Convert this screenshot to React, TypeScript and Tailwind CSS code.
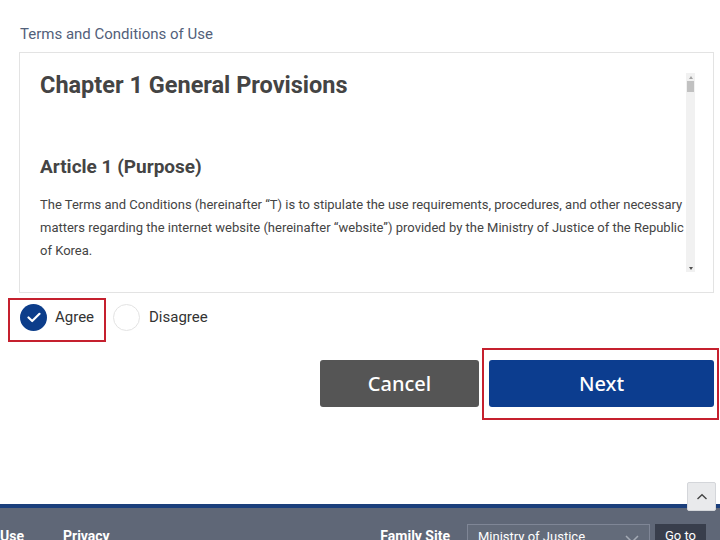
import { useState } from "react";

const paragraph =
  "The Terms and Conditions (hereinafter \u201CT) is to stipulate the use requirements, procedures, and other necessary matters regarding the internet website (hereinafter \u201Cwebsite\u201D) provided by the Ministry of Justice of the Republic of Korea.";

const App = () => {
  const [agree, setAgree] = useState(true);

  return (
    <div className="relative h-[540px] w-[720px] overflow-hidden bg-white font-['Roboto','Liberation_Sans',sans-serif]">
      <section className="pl-[19px] pr-[6px] pt-[24px]">
        <h2 className="pl-px text-[15px] leading-5 text-[#52607a]">Terms and Conditions of Use</h2>

        <div className="mt-[8px] flex h-[241px] border border-[#e3e3e3] py-5 pl-5 pr-[18px]">
          <div className="flex-1 text-[#444]">
            <h3 className="-mt-[2px] text-[23.5px] leading-7 font-bold">Chapter 1 General Provisions</h3>
            <h4 className="mt-[54px] text-[19px] leading-7 font-bold">Article 1 (Purpose)</h4>
            <p className="mt-[12px] text-[13px] leading-[23px]">{paragraph}</p>
          </div>
          {/* fake scrollbar */}
          <div className="flex w-[9px] flex-col bg-[#f1f1f1]">
            <div className="flex h-[8px] items-center justify-center">
              <div className="h-0 w-0 border-x-[2px] border-b-[3px] border-x-transparent border-b-[#a3a3a3]" />
            </div>
            <div className="mx-px h-[11px] bg-[#c1c1c1]" />
            <div className="flex-1" />
            <div className="flex h-[8px] items-center justify-center">
              <div className="h-0 w-0 border-x-[2px] border-t-[3px] border-x-transparent border-t-[#505050]" />
            </div>
          </div>
        </div>
      </section>

      {/* agree / disagree */}
      <div className="mt-[5px] flex items-start pl-[8px]">
        <button
          onClick={() => setAgree(true)}
          className="flex h-[44px] w-[98px] items-center gap-[8px] border-2 border-[#c5202e] pb-[6px] pl-[10px]"
        >
          <span
            className={`flex h-[27px] w-[27px] items-center justify-center rounded-full ${
              agree ? "bg-[#0c3d8a]" : "border border-[#e3e3e3] bg-white"
            }`}
          >
            {agree && (
              <svg width="14" height="11" viewBox="0 0 14 11" fill="none">
                <path d="M1.5 5.5 L5.2 9 L12.5 1.8" stroke="white" strokeWidth="2.2" strokeLinecap="round" strokeLinejoin="round" />
              </svg>
            )}
          </span>
          <span className="text-[15px] text-[#333]">Agree</span>
        </button>
        <button onClick={() => setAgree(false)} className="ml-[7px] mt-[6px] flex items-center gap-[9px]">
          <span
            className={`flex h-[27px] w-[27px] items-center justify-center rounded-full ${
              !agree ? "bg-[#0c3d8a]" : "border border-[#e3e3e3] bg-white"
            }`}
          />
          <span className="text-[15px] text-[#333]">Disagree</span>
        </button>
      </div>

      {/* actions */}
      <div className="mt-[6px] flex items-start justify-end gap-[3px] pr-px">
        <button className="mt-[12px] h-[47px] w-[159px] rounded-[3px] bg-[#555] font-['Noto_Sans',sans-serif] text-[20px] font-medium text-white">
          Cancel
        </button>
        <div className="border-2 border-[#c5202e] pt-[10px] pr-[3px] pb-[11px] pl-[5px]">
          <button className="block h-[47px] w-[225px] rounded-[3px] bg-[#0c3d8f] font-['Noto_Sans',sans-serif] text-[20px] font-medium text-white">
            Next
          </button>
        </div>
      </div>

      {/* footer */}
      <footer className="absolute inset-x-0 top-[504px] h-[36px] border-t-[4px] border-[#1b3f7c] bg-[#5f6777]">
        <div className="flex h-full items-end text-[14px] font-bold text-white">
          <span className="-mb-[7px]">Use</span>
          <span className="-mb-[7px] ml-[39px]">Privacy</span>
          <span className="-mb-[7px] ml-auto">Family Site</span>
          <div className="ml-[17px] flex h-[16px] w-[183px] items-start justify-between border border-b-0 border-[#7f8696] bg-[#636b7a] px-[10px] pt-[4px] text-[13px] font-normal leading-4">
            <span>Ministry of Justice</span>
            <svg className="mt-[6px]" width="14" height="8" viewBox="0 0 14 8" fill="none">
              <path d="M1 1 L7 7 L13 1" stroke="#a4aab5" strokeWidth="1.5" />
            </svg>
          </div>
          <div className="ml-[5px] mr-[14px] flex h-[16px] w-[51px] justify-center bg-[#383e4c] pt-[4px] text-[13px] font-normal leading-4">
            Go to
          </div>
        </div>
      </footer>

      {/* back to top */}
      <button className="absolute left-[687px] top-[482px] flex h-[29px] w-[29px] items-center justify-center rounded-[2px] border border-[#d4d6da] bg-[#e9eaec]">
        <svg width="12" height="8" viewBox="0 0 12 8" fill="none">
          <path d="M1.5 6 L6 1.8 L10.5 6" stroke="#444" strokeWidth="1.4" />
        </svg>
      </button>
    </div>
  );
};

export default App;
